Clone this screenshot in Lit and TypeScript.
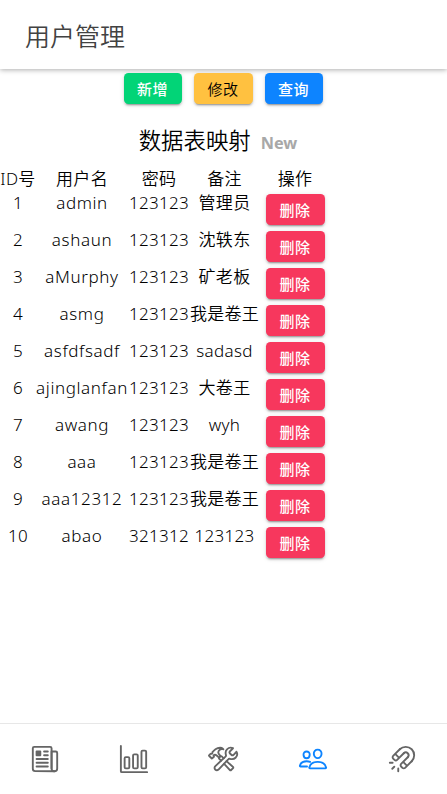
import { LitElement, html, svg, css } from "lit";
import { customElement } from "lit/decorators.js";

const users = [
  ["1", "admin", "123123", "管理员"],
  ["2", "ashaun", "123123", "沈轶东"],
  ["3", "aMurphy", "123123", "矿老板"],
  ["4", "asmg", "123123", "我是卷王"],
  ["5", "asfdfsadf", "123123", "sadasd"],
  ["6", "ajinglanfan", "123123", "大卷王"],
  ["7", "awang", "123123", "wyh"],
  ["8", "aaa", "123123", "我是卷王"],
  ["9", "aaa12312", "123123", "我是卷王"],
  ["10", "abao", "321312", "123123"],
];

const tabs = [
  svg`<path d="M368 415.86V72a24.07 24.07 0 00-24-24H72a24.07 24.07 0 00-24 24v352a40.12 40.12 0 0040 40h328"/>
    <path d="M416 464h0a48 48 0 01-48-48V128h72a24 24 0 0124 24v264a48 48 0 01-48 48z"/>
    <path d="M240 128h64M240 192h64M112 256h192M112 320h192M112 384h192"/>
    <path class="solid" d="M176 208h-64a16 16 0 01-16-16v-64a16 16 0 0116-16h64a16 16 0 0116 16v64a16 16 0 01-16 16z"/>`,
  svg`<path d="M32 32v432a16 16 0 0016 16h432"/>
    <rect x="96" y="224" width="80" height="192" rx="20"/>
    <rect x="240" y="176" width="80" height="240" rx="20"/>
    <rect x="383.64" y="112" width="80" height="304" rx="20"/>`,
  svg`<path d="M436.67 184.11a27.17 27.17 0 01-38.3 0l-22.48-22.49a27.15 27.15 0 010-38.29l50.89-50.89a.85.85 0 00-.26-1.38C393.68 57.57 351.09 64.15 324.05 91c-25.88 25.69-27.35 64.27-17.87 98a27 27 0 01-7.67 27.14l-173 160.76a40.76 40.76 0 1057.57 57.54l162.15-173.3A27 27 0 01372.44 253c33.46 8.94 71.96 7.96 97.65-17.92 27.49-27.59 33.16-72.14 18.4-101.93a.85.85 0 00-1.38-.26z"/>
    <path d="M224 284c-17.48-17-25.49-24.91-31-30.29a18.24 18.24 0 01-3.33-21.35 20.76 20.76 0 013.5-4.62l15.68-15.29a18.66 18.66 0 015.63-3.87 18.11 18.11 0 0120 3.62c5.45 5.29 15.43 15 33.41 32.52M317.07 291.3c40.95 38.1 90.62 83.27 110 99.41a13.46 13.46 0 01.94 19.92L394.63 444a14 14 0 01-20.29.76c-16.53-19.18-61.09-67.11-99.27-107"/>
    <path d="M17.34 193.5l29.41-28.74a4.71 4.71 0 013.41-1.35 4.85 4.85 0 013.41 1.35h0a9.86 9.86 0 008.19 2.77c3.83-.42 7.92-1.6 10.57-4.12 6-5.8-.94-17.23 4.34-24.54a207 207 0 0119.78-22.6c6-5.88 29.84-28.32 69.9-44.45A107.31 107.31 0 01206.67 64c22.59 0 40 10 46.26 15.67a89.54 89.54 0 0110.28 11.64 78.92 78.92 0 00-9.21-2.77 68.82 68.82 0 00-20-1.26c-13.33 1.09-29.41 7.26-38 14-13.9 11-19.87 25.72-20.81 44.71-.68 14.12 2.72 22.1 36.1 55.49a6.6 6.6 0 01-.34 9.16l-18.22 18a6.88 6.88 0 01-9.54.09c-21.94-21.94-36.65-33.09-45-38.16s-15.07-6.5-18.3-6.85a30.85 30.85 0 00-18.27 3.87 11.39 11.39 0 00-2.64 2 14.14 14.14 0 00.42 20.08l1.71 1.6a4.63 4.63 0 010 6.64L71.73 246.6a4.71 4.71 0 01-3.41 1.4 4.86 4.86 0 01-3.41-1.35l-47.57-46.49a4.88 4.88 0 010-6.66z"/>`,
  svg`<path d="M402 168c-2.93 40.67-33.1 72-66 72s-63.12-31.32-66-72c-3-42.31 26.37-72 66-72s69 30.46 66 72z"/>
    <path d="M336 304c-65.17 0-127.84 32.37-143.54 95.41-2.08 8.34 3.15 16.59 11.72 16.59h263.65c8.57 0 13.77-8.25 11.72-16.59C463.85 335.36 401.18 304 336 304z"/>
    <path d="M200 185.94c-2.34 32.48-26.72 58.06-53 58.06s-50.7-25.57-53-58.06C91.61 152.15 115.34 128 147 128s55.39 24.77 53 57.94z"/>
    <path d="M206 306c-18.05-8.27-37.93-11.45-59-11.45-52 0-102.1 25.85-114.65 76.2-1.65 6.66 2.53 13.25 9.37 13.25H154"/>`,
  svg`<path d="M421.83 293.82A144 144 0 00218.18 90.17M353.94 225.94a48 48 0 00-67.88-67.88"/>
    <path d="M192 464v-48M90.18 421.82l33.94-33.94M48 320h48"/>
    <path d="M286.06 158.06L172.92 271.19a32 32 0 01-45.25 0L105 248.57a32 32 0 010-45.26L218.18 90.17M421.83 293.82L308.69 407a32 32 0 01-45.26 0l-22.62-22.63a32 32 0 010-45.26l113.13-113.17M139.6 169.98l67.88 67.89M275.36 305.75l67.89 67.88"/>`,
];

@customElement("app-root")
export class AppRoot extends LitElement {
  static styles = css`
    :host {
      display: flex;
      flex-direction: column;
      height: 794px;
      overflow: hidden;
      background: #fff;
      color: #000;
      font-family: "Noto Sans", "Noto Sans CJK SC", sans-serif;
      font-weight: 350;
      font-size: 17px;
    }
    * { box-sizing: border-box; }
    header {
      height: 69px;
      flex: none;
      padding: 0 25px;
      font: 350 25px/70px "Noto Sans CJK SC", sans-serif;
      color: #424242;
      box-shadow: 0 1px 5px rgba(0, 0, 0, 0.32);
    }
    main { flex: 1; }
    .actions {
      display: flex;
      justify-content: center;
      gap: 12px;
      padding-top: 4px;
    }
    .btn {
      display: block;
      width: 58px;
      height: 31px;
      padding: 0 1px 0 0;
      border: 0;
      border-radius: 4.5px;
      font: 500 15px/32px "Noto Sans CJK SC", sans-serif;
      letter-spacing: 0.5px;
      color: #fff;
      text-align: center;
      box-shadow: 0 3px 1px -2px rgba(0, 0, 0, 0.2), 0 2px 2px 0 rgba(0, 0, 0, 0.14), 0 1px 5px 0 rgba(0, 0, 0, 0.12);
    }
    .success { background: #02d477; }
    .warning { background: #ffc140; color: #000; width: 59px; font-weight: 350; }
    .primary { background: #0d84ff; }
    .danger { background: #f7375d; width: 59px; line-height: 31px; }
    h1 {
      display: flex;
      justify-content: center;
      align-items: baseline;
      gap: 10px;
      margin: 16px 11px 0 0;
      height: 47px;
      font: 350 22.4px/38px "Noto Sans CJK SC", sans-serif;
    }
    h1 small {
      font: 700 16.3px/38px "Noto Sans", sans-serif;
      color: #a8a8a8;
    }
    .table {
      display: grid;
      grid-template-columns: 36px 92px 62px 69px 72px;
      grid-template-rows: 24px;
      grid-auto-rows: 37px;
      text-align: center;
      line-height: 24px;
      letter-spacing: 0.3px;
      white-space: nowrap;
    }
    .table > span { display: flex; justify-content: center; }
    .table .name { letter-spacing: 0.62px; }
    .table .op { padding-top: 3px; }
    .op .btn { margin-right: -1px; }
    nav {
      flex: none;
      height: 71px;
      border-top: 1px solid #e7e7e7;
      display: grid;
      grid-template-columns: repeat(5, 1fr);
      place-items: center;
      color: #656565;
    }
    svg {
      width: 30px;
      height: 30px;
      overflow: visible;
      fill: none;
      stroke: currentColor;
      stroke-width: 32;
      stroke-linecap: round;
      stroke-linejoin: round;
    }
    .solid { fill: currentColor; stroke: none; }
    .active { color: #0d84ff; }
  `;

  render() {
    return html`
      <header>用户管理</header>
      <main>
        <div class="actions">
          <button class="btn success">新增</button>
          <button class="btn warning">修改</button>
          <button class="btn primary">查询</button>
        </div>
        <h1>数据表映射<small>New</small></h1>
        <div class="table">
          ${["ID号", "用户名", "密码", "备注", "操作"].map((t) => html`<span>${t}</span>`)}
          ${users.map(
            (row) => html`${row.map((cell, i) => html`<span class=${i === 1 ? "name" : ""}>${cell}</span>`)}
              <span class="op"><button class="btn danger">删除</button></span>`
          )}
        </div>
      </main>
      <nav>
        ${tabs.map((icon, i) => html`<svg class=${i === 3 ? "active" : ""} viewBox="0 0 512 512">${icon}</svg>`)}
      </nav>
    `;
  }
}
